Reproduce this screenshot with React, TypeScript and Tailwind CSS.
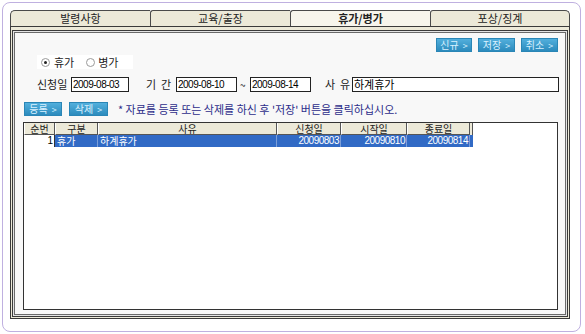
import React from "react";

const KR = { fontFamily: '"Noto Sans CJK KR", "Noto Sans", sans-serif' };
const NUM = { fontFamily: '"Liberation Sans", Arial, sans-serif' };

function Btn({ label, w }: { label: string; w: number }) {
  return (
    <div
      className="h-[14px] flex items-center justify-center text-[10px] leading-none text-[#d9f1ff] bg-[linear-gradient(to_bottom,#52afdc,#2c8bbd)] border border-[#2a86b6]"
      style={{ ...KR, width: w }}
    >
      <span>{label}</span>
      <span className="ml-[4px] text-[9px]">&gt;</span>
    </div>
  );
}

function Radio({ checked }: { checked: boolean }) {
  return (
    <div className="w-[9px] h-[9px] rounded-full border border-[#9a9a9a] bg-white flex items-center justify-center">
      {checked && <div className="w-[3px] h-[3px] rounded-full bg-[#222]" />}
    </div>
  );
}

function Input({ w, value, kr }: { w: number; value: string; kr?: boolean }) {
  return (
    <div
      className="h-[15px] border border-[#222] bg-white flex items-center pl-[1px] text-[10px] leading-none text-black"
      style={{ width: w, ...(kr ? { ...KR, fontSize: 11 } : { ...NUM, letterSpacing: "-0.5px" }) }}
    >
      {value}
    </div>
  );
}

const cols = [
  { label: "순번", w: 31 },
  { label: "구분", w: 43 },
  { label: "사유", w: 179 },
  { label: "신청일", w: 64 },
  { label: "시작일", w: 66 },
  { label: "종료일", w: 63 },
];

export default function App() {
  const tabs = ["발령사항", "교육/출장", "휴가/병가", "포상/징계"];
  return (
    <div className="w-[585px] h-[334px] bg-white pt-[2px] pl-[2px]" style={KR}>
      <div className="w-[579px] h-[330px] border border-[#bfb0e0] rounded-[8px] bg-white pt-[7px] pl-[7px]">
        {/* tabs */}
        <div className="flex w-[560px] h-[16px]">
          {tabs.map((t, i) => (
            <div
              key={t}
              className={
                "w-[140px] h-[16px] border-t border-l border-[#4a4a4a] flex items-center justify-center text-[11px] leading-none text-[#222] " +
                (i === 0 ? "rounded-tl-[5px] " : "rounded-tl-[3px] ") +
                (i === 3 ? "border-r rounded-tr-[5px] " : "") +
                (i === 2 ? "bg-[#f7f5ec] font-bold" : "bg-[#ece9d8]")
              }
            >
              {t}
            </div>
          ))}
        </div>
        {/* panel */}
        <div className="w-[560px] h-[293px] border border-[#3a3a3a] bg-[#ece9d8] pt-[3px] px-[1px] pb-[1px]">
          <div className="h-full border border-[#3a3a3a] bg-[#e4e4e4] p-[1px]">
            <div className="h-full border border-[#6a6a6a] bg-[#f8f8f8] flex flex-col">
              {/* top buttons */}
              <div className="flex justify-end gap-[6px] pr-[7px] mt-[5px]">
                <Btn label="신규" w={36} />
                <Btn label="저장" w={37} />
                <Btn label="취소" w={37} />
              </div>
              {/* radio row */}
              <div className="ml-[22px] mt-[3px] w-[96px] h-[14px] bg-white flex items-center text-[11px] leading-none text-[#222]">
                <div className="ml-[4px]"><Radio checked /></div>
                <span className="ml-[4px]">휴가</span>
                <div className="ml-[12px]"><Radio checked={false} /></div>
                <span className="ml-[3px]">병가</span>
              </div>
              {/* form row */}
              <div className="flex items-center mt-[8px] ml-[22px] h-[15px] text-[11px] leading-none text-[#222]">
                <span className="w-[34px]">신청일</span>
                <Input w={58} value="2009-08-03" />
                <span className="ml-[17px] w-[30px]">기&nbsp;&nbsp;간</span>
                <Input w={61} value="2009-08-10" />
                <span className="ml-[3px] w-[10px] text-[10px]">~</span>
                <Input w={61} value="2009-08-14" />
                <span className="ml-[14px] w-[27px]">사&nbsp;&nbsp;유</span>
                <Input w={207} value="하계휴가" kr />
              </div>
              {/* action row */}
              <div className="flex items-center mt-[10px] ml-[9px] h-[14px]">
                <Btn label="등록" w={38} />
                <div className="ml-[7px]"><Btn label="삭제" w={39} /></div>
                <span className="ml-[10px] text-[11px] leading-none text-[#2d2d8a]">
                  * 자료를 등록 또는 삭제를 하신 후 '저장' 버튼을 클릭하십시오.
                </span>
              </div>
              {/* grid */}
              <div className="ml-[8px] mt-[6px] w-[535px] h-[188px] border border-[#333] bg-white">
                <div className="flex h-[12px]">
                  {cols.map((c) => (
                    <div
                      key={c.label}
                      className="h-[12px] bg-[#ece9d8] border-r border-b border-[#555] border-l border-l-white flex items-center justify-center text-[10px] leading-[10px] text-[#222]"
                      style={{ width: c.w }}
                    >
                      {c.label}
                    </div>
                  ))}
                  <div className="w-[3px] h-[12px] bg-[#ece9d8] border-r border-[#555]" />
                </div>
                <div className="flex h-[12px]">
                  <div className="w-[31px] h-[12px] bg-white border-r border-[#333] flex items-center justify-end pr-[1px] text-[10px] leading-none text-black" style={NUM}>
                    1
                  </div>
                  <div className="w-[43px] h-[12px] bg-[#316ac5] border-r border-[#7b9ed8] flex items-center pl-[2px] text-[10px] leading-[10px] text-white">
                    휴가
                  </div>
                  <div className="w-[179px] h-[12px] bg-[#316ac5] border-r border-[#7b9ed8] flex items-center pl-[2px] text-[10px] leading-[10px] text-white">
                    하계휴가
                  </div>
                  {["20090803", "20090810", "20090814"].map((d, i) => (
                    <div
                      key={d}
                      className="h-[12px] bg-[#316ac5] border-r border-[#7b9ed8] flex items-center justify-end pr-[1px] text-[10px] leading-none text-white"
                      style={{ width: [64, 66, 63][i], ...NUM, letterSpacing: "-0.5px" }}
                    >
                      {d}
                    </div>
                  ))}
                  <div className="w-[3px] h-[12px] bg-[#316ac5]" />
                </div>
              </div>
            </div>
          </div>
        </div>
      </div>
    </div>
  );
}
